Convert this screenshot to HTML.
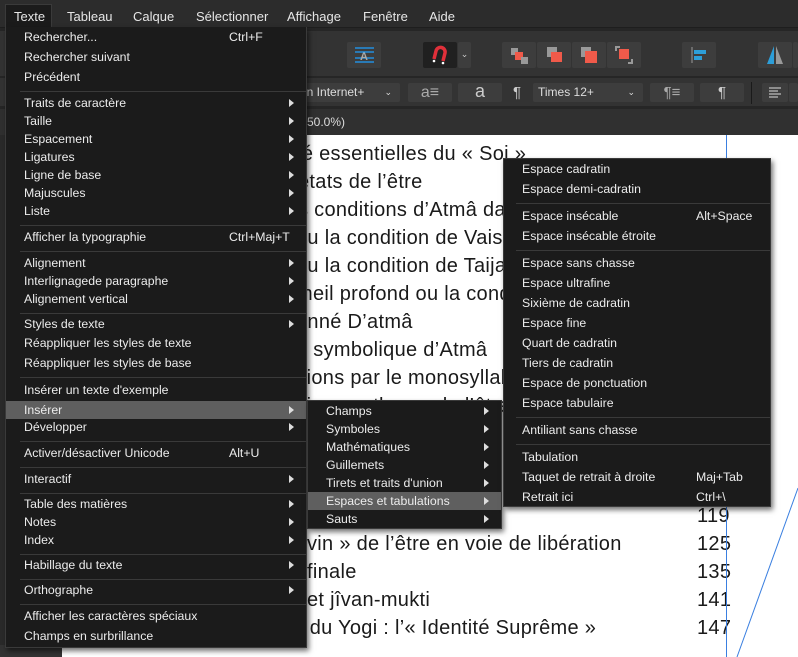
<!DOCTYPE html>
<html><head><meta charset="utf-8"><style>
*{margin:0;padding:0;box-sizing:border-box}
body{width:798px;height:657px;overflow:hidden;background:#fff;font-family:"Liberation Sans",sans-serif;position:relative}
.a{position:absolute}
.mb{left:0;top:0;width:798px;height:28px;background:#2c2c2c;border-bottom:1px solid #1e1e1e}
.mb span{position:absolute;top:9px;color:#e6e6e6;font-size:13px}
.tb{background:#333;}
.btn{position:absolute;background:#3d3d3d;border-radius:2px}
.menu{background:#1b1b1b;box-shadow:2px 3px 5px rgba(0,0,0,.55)}
.it{position:absolute;left:0;right:0;height:18px;color:#ececec;font-size:12.3px;line-height:18px}
.it .t{position:absolute;left:18px}
.it .k{position:absolute}
.it .ar{position:absolute;right:12px;top:5px;width:0;height:0;border-left:5px solid #ddd;border-top:4px solid transparent;border-bottom:4px solid transparent}
.sep{position:absolute;left:14px;right:0;height:1px;background:#3a3a3a}
.hl{background:#5f5f5f}
.doc{font-size:20px;color:#1a1a1a;font-family:"Liberation Sans",sans-serif;letter-spacing:0.3px}
.dl{position:absolute;white-space:nowrap}
.pn{position:absolute;left:697px}
</style></head><body>
<div class="a doc" style="left:0;top:0;width:798px;height:657px">
<div class="dl" style="top:143px;left:296px">té essentielles du « Soi »</div>
<div class="dl" style="top:171px;left:298px">états de l’être</div>
<div class="dl" style="top:199px;left:298px">s conditions d’Atmâ dans</div>
<div class="dl" style="top:227px;left:296px">ou la condition de Vaishvânara</div>
<div class="dl" style="top:255px;left:296px">ou la condition de Taijasa</div>
<div class="dl" style="top:283px;left:296px">meil profond ou la condition</div>
<div class="dl" style="top:311px;left:296px">onné D’atmâ</div>
<div class="dl" style="top:339px;left:296px">n symbolique d’Atmâ</div>
<div class="dl" style="top:367px;left:296px">itions par le monosyllabe</div>
<div class="dl" style="top:395px;left:296px">ition posthume de l’être</div>
<div class="dl" style="top:505px;left:300px">re »</div><div class="pn" style="top:505px">119</div>
<div class="dl" style="top:533px;left:307px">vin » de l’être en voie de libération</div><div class="pn" style="top:533px">125</div>
<div class="dl" style="top:561px;left:307px">finale</div><div class="pn" style="top:561px">135</div>
<div class="dl" style="top:589px;left:307px">et jîvan-mukti</div><div class="pn" style="top:589px">141</div>
<div class="dl" style="top:617px;left:298px">, du Yogi : l’« Identité Suprême »</div><div class="pn" style="top:617px">147</div>
</div>
<div class="a" style="left:726px;top:135px;width:1px;height:522px;background:#3a7fe0"></div>
<svg class="a" style="left:0;top:0" width="798" height="657"><line x1="798" y1="488" x2="737" y2="657" stroke="#3a7fe0" stroke-width="1"/></svg>
<div class="a" style="left:0;top:135px;width:6px;height:522px;background:#2a2a2a"></div>
<div class="a" style="left:0;top:645px;width:62px;height:12px;background:#333"></div>

<div class="a tb" style="left:0;top:28px;width:798px;height:48px;border-top:3px solid #262626"></div>
<div class="a" style="left:0;top:76px;width:798px;height:2px;background:#262626"></div>
<div class="a tb" style="left:0;top:78px;width:798px;height:28px"></div>
<div class="a" style="left:0;top:106px;width:798px;height:3px;background:#262626"></div>
<div class="a" style="left:0;top:109px;width:798px;height:26px;background:#303030"></div>
<div class="a" style="left:307px;top:115px;color:#ddd;font-size:12px">50.0%)</div>

<div class="btn" style="left:347px;top:42px;width:34px;height:26px"><svg width="34" height="26"><g stroke="#1ea0ff" stroke-width="1.3"><line x1="8" y1="6" x2="27" y2="6"/><line x1="8" y1="10" x2="27" y2="10"/><line x1="8" y1="16" x2="27" y2="16"/><line x1="8" y1="20" x2="27" y2="20"/></g><text x="13" y="18" font-size="11" fill="#aaa" font-family="Liberation Sans" font-weight="bold">A</text></svg></div>
<div class="btn" style="left:423px;top:42px;width:34px;height:26px;background:#202020"><svg width="34" height="26"><path d="M11 17 L13 9 A4.5 4.5 0 0 1 22 11 L20 19" stroke="#e0303a" stroke-width="3.5" fill="none"/><circle cx="11" cy="19" r="1.3" fill="#fff"/><circle cx="20" cy="21" r="1.3" fill="#fff"/></svg></div>
<div class="btn" style="left:458px;top:42px;width:13px;height:26px;color:#ccc;font-size:9px;text-align:center;line-height:24px">⌄</div>
<div class="btn" style="left:502px;top:42px;width:34px;height:26px"><svg width="34" height="26"><rect x="9" y="6" width="7" height="7" fill="#999"/><rect x="13" y="10" width="8" height="8" fill="#f05a4a"/><rect x="19" y="15" width="7" height="7" fill="#999"/></svg></div>
<div class="btn" style="left:537px;top:42px;width:34px;height:26px"><svg width="34" height="26"><rect x="10" y="5" width="10" height="10" fill="#999"/><rect x="14" y="10" width="11" height="10" fill="#f05a4a"/></svg></div>
<div class="btn" style="left:572px;top:42px;width:34px;height:26px"><svg width="34" height="26"><rect x="9" y="5" width="10" height="10" fill="#999"/><rect x="13" y="9" width="12" height="12" fill="#f05a4a"/></svg></div>
<div class="btn" style="left:607px;top:42px;width:34px;height:26px"><svg width="34" height="26"><path d="M9 9 v-4 h4 M25 17 v4 h-4" stroke="#999" stroke-width="2" fill="none"/><rect x="12" y="7" width="10" height="10" fill="#f05a4a"/></svg></div>
<div class="btn" style="left:682px;top:42px;width:34px;height:26px"><svg width="34" height="26"><line x1="10" y1="5" x2="10" y2="21" stroke="#999"/><rect x="12" y="8" width="12" height="4" fill="#2d9ed8"/><rect x="12" y="14" width="8" height="4" fill="#2d9ed8"/></svg></div>
<div class="btn" style="left:758px;top:42px;width:34px;height:26px"><svg width="34" height="26"><path d="M16 4 L16 22 L9 22 Z" fill="#2d9ed8"/><path d="M18 4 L18 22 L25 22 Z" fill="#999"/></svg></div>
<div class="btn" style="left:793px;top:42px;width:5px;height:26px"></div>

<div class="btn" style="left:240px;top:83px;width:160px;height:19px;color:#ddd;font-size:12px;line-height:19px;padding-left:60px">en Internet+<span style="position:absolute;right:8px;font-size:9px">⌄</span></div>
<div class="btn" style="left:408px;top:83px;width:44px;height:19px;color:#aaa;font-size:16px;text-align:center;line-height:19px">a≡</div>
<div class="btn" style="left:458px;top:83px;width:44px;height:19px;color:#ccc;font-size:18px;text-align:center;line-height:16px">a</div>
<div class="a" style="left:513px;top:84px;color:#ccc;font-size:15px">¶</div>
<div class="btn" style="left:533px;top:83px;width:110px;height:19px;color:#ddd;font-size:12px;line-height:19px;padding-left:5px">Times 12+<span style="position:absolute;right:8px;font-size:9px">⌄</span></div>
<div class="btn" style="left:650px;top:83px;width:44px;height:19px;color:#aaa;font-size:15px;text-align:center;line-height:19px">¶≡</div>
<div class="btn" style="left:700px;top:83px;width:44px;height:19px;color:#ccc;font-size:15px;text-align:center;line-height:19px">¶</div>
<div class="a" style="left:751px;top:82px;width:1px;height:22px;background:#1a1a1a"></div>
<div class="btn" style="left:762px;top:83px;width:26px;height:19px"><svg width="26" height="19"><g stroke="#ddd"><line x1="7" y1="5" x2="19" y2="5"/><line x1="7" y1="8" x2="16" y2="8"/><line x1="7" y1="11" x2="19" y2="11"/><line x1="7" y1="14" x2="16" y2="14"/></g></svg></div>
<div class="btn" style="left:789px;top:83px;width:9px;height:19px"></div>

<div class="a mb">
<div class="a" style="left:5px;top:4px;width:47px;height:24px;background:#1b1b1b;border:1px solid #3a3a3a;border-bottom:none"></div>
<span style="left:14px">Texte</span><span style="left:67px">Tableau</span><span style="left:133px">Calque</span><span style="left:196px">Sélectionner</span><span style="left:287px">Affichage</span><span style="left:363px">Fenêtre</span><span style="left:429px">Aide</span>
</div>

<div class="a menu" style="left:5px;top:27px;width:302px;height:621px;border:1px solid #3a3a3a;border-top:none">
<div class="it" style="top:1px"><span class="t">Rechercher...</span><span class="k" style="left:223px">Ctrl+F</span></div>
<div class="it" style="top:21px"><span class="t">Rechercher suivant</span></div>
<div class="it" style="top:41px"><span class="t">Précédent</span></div>
<div class="sep" style="top:64px"></div>
<div class="it" style="top:67px"><span class="t">Traits de caractère</span><span class="ar"></span></div>
<div class="it" style="top:85px"><span class="t">Taille</span><span class="ar"></span></div>
<div class="it" style="top:103px"><span class="t">Espacement</span><span class="ar"></span></div>
<div class="it" style="top:121px"><span class="t">Ligatures</span><span class="ar"></span></div>
<div class="it" style="top:139px"><span class="t">Ligne de base</span><span class="ar"></span></div>
<div class="it" style="top:157px"><span class="t">Majuscules</span><span class="ar"></span></div>
<div class="it" style="top:175px"><span class="t">Liste</span><span class="ar"></span></div>
<div class="sep" style="top:198px"></div>
<div class="it" style="top:201px"><span class="t">Afficher la typographie</span><span class="k" style="left:223px">Ctrl+Maj+T</span></div>
<div class="sep" style="top:224px"></div>
<div class="it" style="top:227px"><span class="t">Alignement</span><span class="ar"></span></div>
<div class="it" style="top:245px"><span class="t">Interlignagede paragraphe</span><span class="ar"></span></div>
<div class="it" style="top:263px"><span class="t">Alignement vertical</span><span class="ar"></span></div>
<div class="sep" style="top:286px"></div>
<div class="it" style="top:288px"><span class="t">Styles de texte</span><span class="ar"></span></div>
<div class="it" style="top:307px"><span class="t">Réappliquer les styles de texte</span></div>
<div class="it" style="top:327px"><span class="t">Réappliquer les styles de base</span></div>
<div class="sep" style="top:350px"></div>
<div class="it" style="top:354px"><span class="t">Insérer un texte d'exemple</span></div>
<div class="it hl" style="top:374px"><span class="t">Insérer</span><span class="ar"></span></div>
<div class="it" style="top:391px"><span class="t">Développer</span><span class="ar"></span></div>
<div class="sep" style="top:414px"></div>
<div class="it" style="top:417px"><span class="t">Activer/désactiver Unicode</span><span class="k" style="left:223px">Alt+U</span></div>
<div class="sep" style="top:440px"></div>
<div class="it" style="top:443px"><span class="t">Interactif</span><span class="ar"></span></div>
<div class="sep" style="top:466px"></div>
<div class="it" style="top:468px"><span class="t">Table des matières</span><span class="ar"></span></div>
<div class="it" style="top:486px"><span class="t">Notes</span><span class="ar"></span></div>
<div class="it" style="top:504px"><span class="t">Index</span><span class="ar"></span></div>
<div class="sep" style="top:527px"></div>
<div class="it" style="top:529px"><span class="t">Habillage du texte</span><span class="ar"></span></div>
<div class="sep" style="top:552px"></div>
<div class="it" style="top:554px"><span class="t">Orthographe</span><span class="ar"></span></div>
<div class="sep" style="top:577px"></div>
<div class="it" style="top:580px"><span class="t">Afficher les caractères spéciaux</span></div>
<div class="it" style="top:600px"><span class="t">Champs en surbrillance</span></div>
</div>

<div class="a menu" style="left:307px;top:400px;width:195px;height:129px;border:1px solid #3a3a3a">
<div class="it" style="top:1px"><span class="t">Champs</span><span class="ar"></span></div>
<div class="it" style="top:19px"><span class="t">Symboles</span><span class="ar"></span></div>
<div class="it" style="top:37px"><span class="t">Mathématiques</span><span class="ar"></span></div>
<div class="it" style="top:55px"><span class="t">Guillemets</span><span class="ar"></span></div>
<div class="it" style="top:73px"><span class="t">Tirets et traits d'union</span><span class="ar"></span></div>
<div class="it hl" style="top:91px"><span class="t">Espaces et tabulations</span><span class="ar"></span></div>
<div class="it" style="top:109px"><span class="t">Sauts</span><span class="ar"></span></div>
</div>

<div class="a menu" style="left:503px;top:158px;width:268px;height:349px;border:1px solid #3a3a3a">
<div class="it" style="top:1px"><span class="t">Espace cadratin</span></div>
<div class="it" style="top:21px"><span class="t">Espace demi-cadratin</span></div>
<div class="sep" style="top:44px;left:12px"></div>
<div class="it" style="top:48px"><span class="t">Espace insécable</span><span class="k" style="left:192px">Alt+Space</span></div>
<div class="it" style="top:68px"><span class="t">Espace insécable étroite</span></div>
<div class="sep" style="top:91px;left:12px"></div>
<div class="it" style="top:95px"><span class="t">Espace sans chasse</span></div>
<div class="it" style="top:115px"><span class="t">Espace ultrafine</span></div>
<div class="it" style="top:135px"><span class="t">Sixième de cadratin</span></div>
<div class="it" style="top:155px"><span class="t">Espace fine</span></div>
<div class="it" style="top:175px"><span class="t">Quart de cadratin</span></div>
<div class="it" style="top:195px"><span class="t">Tiers de cadratin</span></div>
<div class="it" style="top:215px"><span class="t">Espace de ponctuation</span></div>
<div class="it" style="top:235px"><span class="t">Espace tabulaire</span></div>
<div class="sep" style="top:258px;left:12px"></div>
<div class="it" style="top:262px"><span class="t">Antiliant sans chasse</span></div>
<div class="sep" style="top:285px;left:12px"></div>
<div class="it" style="top:289px"><span class="t">Tabulation</span></div>
<div class="it" style="top:309px"><span class="t">Taquet de retrait à droite</span><span class="k" style="left:192px">Maj+Tab</span></div>
<div class="it" style="top:329px"><span class="t">Retrait ici</span><span class="k" style="left:192px">Ctrl+\</span></div>
</div>
</body></html>
